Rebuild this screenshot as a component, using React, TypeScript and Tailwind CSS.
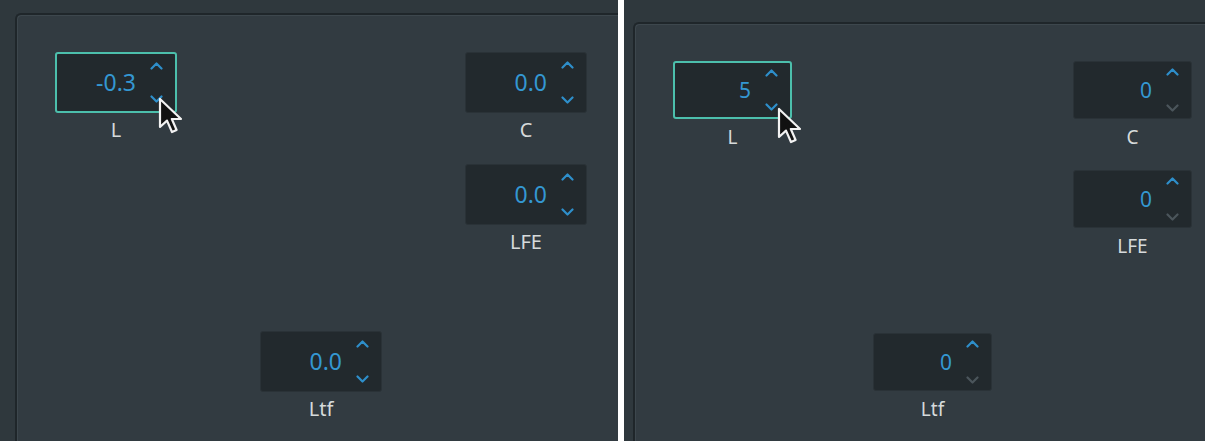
import React from 'react'

type SpinProps = {
  value: string
  label: string
  focused?: boolean
  downDisabled?: boolean
  small?: boolean
}

function Chevron({ up, disabled }: { up?: boolean; disabled?: boolean }) {
  return (
    <svg width="13" height="8" viewBox="0 0 13 8" className="block">
      <path
        d={up ? 'M1.5 6.5 L6.5 1.5 L11.5 6.5' : 'M1.5 1.5 L6.5 6.5 L11.5 1.5'}
        fill="none"
        stroke={disabled ? '#4b555b' : '#2e8fcb'}
        strokeWidth="2.2"
        strokeLinecap="round"
        strokeLinejoin="round"
      />
    </svg>
  )
}

function SpinBox({ value, label, focused, downDisabled, small }: SpinProps) {
  return (
    <div className="flex flex-col items-center">
      <div
        className={
          (small ? 'h-[58px] w-[119px] ' : 'h-[61px] w-[122px] ') +
          (focused
            ? 'border-2 border-[#4cbfac] '
            : 'border border-[#2a3237] ') +
          'flex items-center rounded-[3px] bg-[#22292d]'
        }
      >
        <span
          className={
            (small ? 'text-[21px] ' : 'text-[23px] ') +
            'flex-1 pr-[3px] text-right leading-none text-[#3497d2]'
          }
        >
          {value}
        </span>
        <div
          className={
            (small ? 'py-[6px] ' : 'py-[8px] ') +
            'flex h-full w-[36px] flex-col items-center justify-between pr-[2px]'
          }
        >
          <Chevron up />
          <Chevron disabled={downDisabled} />
        </div>
      </div>
      <span
        className={
          (small ? 'mt-[8px] text-[19px] leading-[20px] ' : 'mt-[6px] text-[20px] leading-[22px] ') +
          'text-[#d6dadb]'
        }
      >
        {label}
      </span>
    </div>
  )
}

function Cursor({ className }: { className: string }) {
  return (
    <svg width="26" height="40" viewBox="0 0 13 20" className={'absolute ' + className}>
      <path
        d="M1 1 L1 15 L4.5 11.8 L7 17.5 L9.3 16.5 L6.9 11 L11.5 11 Z"
        fill="#111"
        stroke="#f2f2f2"
        strokeWidth="1.1"
        strokeLinejoin="round"
      />
    </svg>
  )
}

export default function App() {
  return (
    <div
      className="flex h-[441px] w-[1205px] overflow-hidden bg-white"
      style={{ fontFamily: '"Noto Sans", "Open Sans", sans-serif' }}
    >
      {/* left capture */}
      <div className="relative h-full w-[618px] bg-[#2f383d] pl-[15px] pt-[13px]">
        <div className="h-full w-full rounded-tl-[6px] border-l-2 border-t-2 border-[#1f262a] bg-[#323b41] shadow-[inset_1px_1px_0_#3d474d]">
          <div className="grid grid-cols-[122px_122px_122px] grid-rows-[88px_112px_167px] gap-x-[83px] pl-[38px] pt-[38px]">
            <div className="col-start-1 row-start-1 self-end">
              <SpinBox value="-0.3" label="L" focused />
            </div>
            <div className="col-start-3 row-start-1 self-end pt-[1px]">
              <SpinBox value="0.0" label="C" />
            </div>
            <div className="col-start-3 row-start-2 self-end">
              <SpinBox value="0.0" label="LFE" />
            </div>
            <div className="col-start-2 row-start-3 self-end">
              <SpinBox value="0.0" label="Ltf" />
            </div>
          </div>
        </div>
        <Cursor className="left-[158px] top-[97px]" />
      </div>

      <div className="w-[6px] bg-white" />

      {/* right capture */}
      <div className="relative h-full flex-1 bg-[#2f383d] pl-[9px] pt-[22px]">
        <div className="h-full w-full rounded-tl-[6px] border-l-2 border-t-2 border-[#1f262a] bg-[#323b41] shadow-[inset_1px_1px_0_#3d474d]">
          <div className="grid grid-cols-[119px_119px_119px] grid-rows-[86px_109px_163px] gap-x-[81px] pl-[38px] pt-[37px]">
            <div className="col-start-1 row-start-1 self-end">
              <SpinBox value="5" label="L" focused small />
            </div>
            <div className="col-start-3 row-start-1 self-end pt-[1px]">
              <SpinBox value="0" label="C" downDisabled small />
            </div>
            <div className="col-start-3 row-start-2 self-end">
              <SpinBox value="0" label="LFE" downDisabled small />
            </div>
            <div className="col-start-2 row-start-3 self-end">
              <SpinBox value="0" label="Ltf" downDisabled small />
            </div>
          </div>
        </div>
        <Cursor className="left-[153px] top-[107px]" />
      </div>
    </div>
  )
}
